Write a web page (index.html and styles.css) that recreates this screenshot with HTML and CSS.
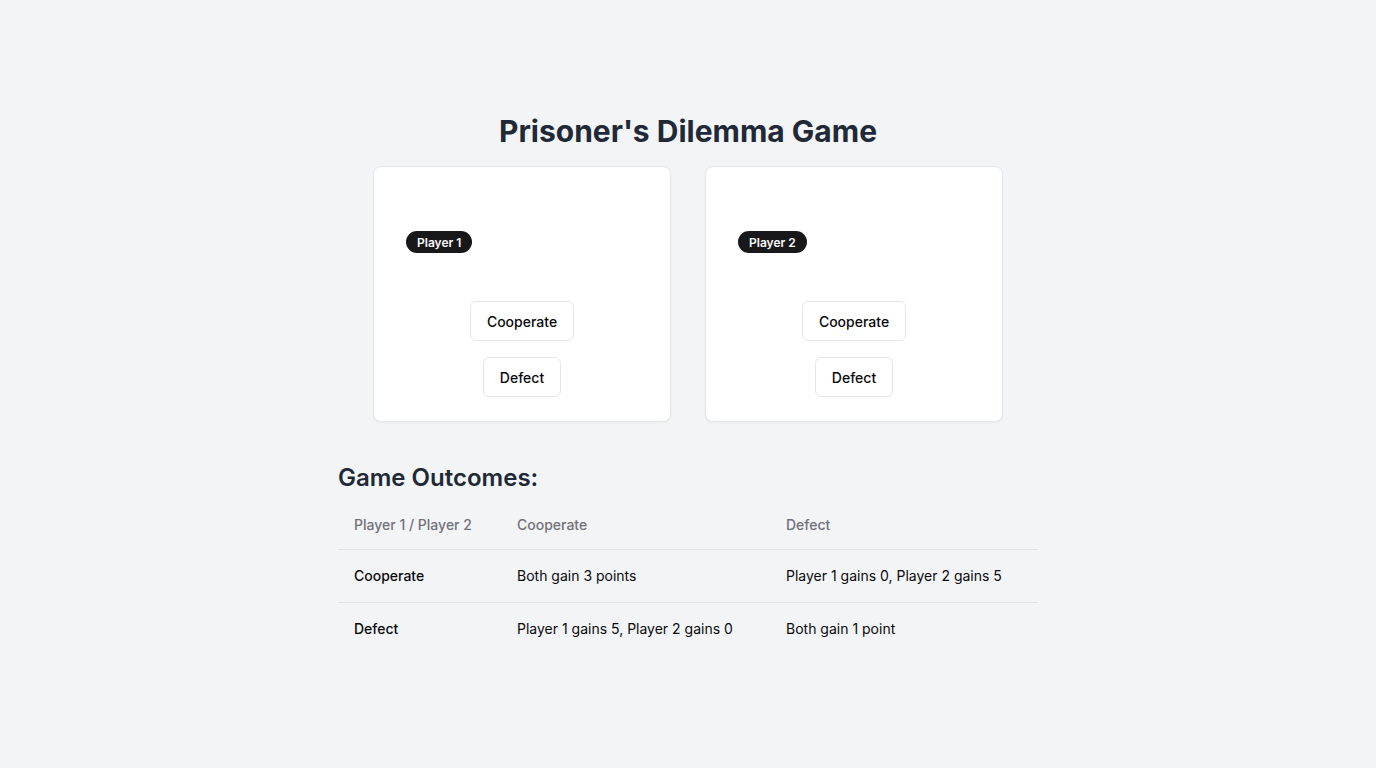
FILE: index.html
```html
<!DOCTYPE html>
<html lang="en">
<head>
<meta charset="utf-8">
<title>Prisoner's Dilemma Game</title>
<link rel="stylesheet" href="styles.css">
</head>
<body>
<main class="page">
  <div class="content">
    <h1 class="title">Prisoner's Dilemma Game</h1>
    <div class="cards">
      <section class="card">
        <span class="badge">Player 1</span>
        <div class="actions">
          <button class="btn">Cooperate</button>
          <button class="btn">Defect</button>
        </div>
      </section>
      <section class="card">
        <span class="badge">Player 2</span>
        <div class="actions">
          <button class="btn">Cooperate</button>
          <button class="btn">Defect</button>
        </div>
      </section>
    </div>
    <h2 class="subtitle">Game Outcomes:</h2>
    <table class="outcomes">
      <thead>
        <tr>
          <th class="c1">Player 1 / Player 2</th>
          <th class="c2">Cooperate</th>
          <th class="c3">Defect</th>
        </tr>
      </thead>
      <tbody>
        <tr>
          <td class="rowhead">Cooperate</td>
          <td>Both gain 3 points</td>
          <td>Player 1 gains 0, Player 2 gains 5</td>
        </tr>
        <tr>
          <td class="rowhead">Defect</td>
          <td>Player 1 gains 5, Player 2 gains 0</td>
          <td>Both gain 1 point</td>
        </tr>
      </tbody>
    </table>
  </div>
</main>
</body>
</html>
```

FILE: styles.css
```css
* { box-sizing: border-box; }
html, body { margin: 0; padding: 0; }
body {
  background: #f3f4f6;
  font-family: Inter, "Liberation Sans", sans-serif;
  color: #111827;
}
.page {
  min-height: 100vh;
  display: flex;
  align-items: center;
  justify-content: center;
}
.content {
  width: 700px;
  display: flex;
  flex-direction: column;
  align-items: center;
}
.title {
  margin: 0 0 17px;
  font-size: 30px;
  line-height: 36px;
  font-weight: 700;
  color: #1f2937;
}
.cards {
  display: flex;
  gap: 34px;
}
.card {
  width: 298px;
  background: #fff;
  border: 1px solid #e5e7eb;
  border-radius: 8px;
  box-shadow: 0 1px 2px rgba(0,0,0,0.05);
  padding: 64px 32px 24px;
  display: flex;
  flex-direction: column;
  align-items: flex-start;
}
.badge {
  display: inline-flex;
  align-items: center;
  height: 22px;
  padding: 0 11px;
  border-radius: 999px;
  background: #18181b;
  color: #fafafa;
  font-size: 12px;
  font-weight: 600;
}
.actions {
  align-self: stretch;
  margin-top: 48px;
  display: flex;
  flex-direction: column;
  align-items: center;
  gap: 16px;
}
.btn {
  height: 40px;
  padding: 0 16px;
  background: #fff;
  border: 1px solid #e5e7eb;
  border-radius: 6px;
  font-family: inherit;
  font-size: 14px;
  font-weight: 500;
  color: #09090b;
  cursor: pointer;
}
.subtitle {
  align-self: stretch;
  margin: 40px 0 7px;
  font-size: 24px;
  line-height: 32px;
  font-weight: 600;
  color: #1f2937;
}
.outcomes {
  width: 700px;
  border-collapse: collapse;
  font-size: 14px;
  line-height: 20px;
  table-layout: fixed;
}
.c1 { width: 163px; }
.c2 { width: 269px; }
.c3 { width: 268px; }
.outcomes th {
  height: 48px;
  padding: 0 16px;
  text-align: left;
  font-weight: 500;
  color: #71717a;
  border-bottom: 1px solid #e4e4e7;
}
.outcomes td {
  padding: 16px;
  color: #09090b;
  border-bottom: 1px solid #e4e4e7;
}
.outcomes tbody tr:last-child td { border-bottom: none; }
.rowhead { font-weight: 500; }
```
